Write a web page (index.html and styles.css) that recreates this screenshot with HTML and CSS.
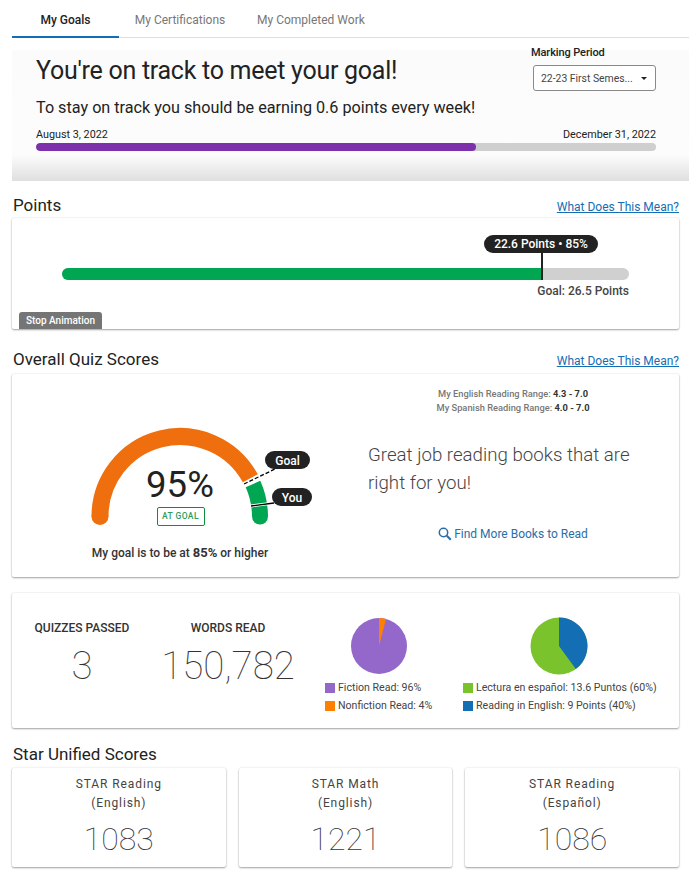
FILE: index.html
```html
<!DOCTYPE html>
<html lang="en">
<head>
<meta charset="utf-8">
<title>My Goals</title>
<link rel="stylesheet" href="styles.css">
</head>
<body>
<nav class="tabs">
  <a class="tab active">My Goals</a>
  <a class="tab t2">My Certifications</a>
  <a class="tab t3">My Completed Work</a>
</nav>
<section class="hero">
  <div class="hero-top">
    <h1>You're on track to meet your goal!</h1>
    <div class="period">
      <div class="period-label">Marking Period</div>
      <div class="select"><span>22-23 First Semes...</span><i class="caret"></i></div>
    </div>
  </div>
  <p class="hero-sub">To stay on track you should be earning 0.6 points every week!</p>
  <div class="dates"><span>August 3, 2022</span><span>December 31, 2022</span></div>
  <div class="time-bar"><div class="time-fill"></div></div>
</section>
<main class="content">
  <div class="sec-head"><h2>Points</h2><a class="help">What Does This Mean?</a></div>
  <section class="card points">
    <div class="pbar"><div class="pfill"></div><div class="pmark"></div><div class="ppill">22.6 Points • 85%</div></div>
    <div class="pgoal">Goal: 26.5 Points</div>
    <button class="stop">Stop Animation</button>
  </section>

  <div class="sec-head quiz-head"><h2>Overall Quiz Scores</h2><a class="help">What Does This Mean?</a></div>
  <section class="card quiz">
    <div class="quiz-left">
      <svg class="gauge" width="336" height="166" viewBox="0 0 336 166">
        <path d="M88 142.500 A80 80 0 0 1 238.300 104.300" class="g-or"/>
        <circle cx="88" cy="142.500" r="8.500" fill="#ef6f0f"/>
        <path d="M241 110 A80 80 0 0 1 248 142.500" class="g-gr"/>
        <circle cx="248" cy="142.500" r="8" fill="#00a651"/>
        <line x1="232" y1="110" x2="263" y2="95" class="g-halo"/>
        <line x1="232" y1="110" x2="263" y2="95" class="g-dash"/>
        <line x1="239" y1="132" x2="262" y2="129" class="g-halo"/>
        <line x1="239" y1="132" x2="262" y2="129" class="g-line"/>
        <rect x="253" y="77" width="45" height="18" rx="9" fill="#222"/>
        <text x="275.500" y="91" class="g-pill">Goal</text>
        <rect x="260" y="114" width="40" height="18" rx="9" fill="#222"/>
        <text x="280" y="128" class="g-pill">You</text>
      </svg>
      <div class="pct">95%</div>
      <div class="at-goal">AT GOAL</div>
      <div class="mygoal">My goal is to be at <b>85%</b> or higher</div>
    </div>
    <div class="quiz-right">
      <div class="ranges">
        <div>My English Reading Range: <b>4.3 - 7.0</b></div>
        <div>My Spanish Reading Range: <b>4.0 - 7.0</b></div>
      </div>
      <p class="great">Great job reading books that are right for you!</p>
      <a class="find">
        <svg width="14" height="14" viewBox="0 0 14 14"><circle cx="5.500" cy="5.500" r="4.200" class="s-ic"/><line x1="8.800" y1="8.800" x2="12.800" y2="12.800" class="s-ic s-h"/></svg>
        Find More Books to Read
      </a>
    </div>
  </section>

  <section class="card stats">
    <div class="stat s1"><div class="stat-label">QUIZZES PASSED</div><div class="stat-num">3</div></div>
    <div class="stat s2"><div class="stat-label">WORDS READ</div><div class="stat-num">150,782</div></div>
    <div class="pie-group g1">
      <svg class="pie" width="58" height="58" viewBox="0 0 58 58"><circle cx="29" cy="29" r="28" fill="#9467cb"/><path d="M29 29 L29 1 A28 28 0 0 1 36 1.900 Z" fill="#ff8000"/></svg>
      <div class="legend"><i class="sw purple"></i>Fiction Read: 96%</div>
      <div class="legend"><i class="sw orange"></i>Nonfiction Read: 4%</div>
    </div>
    <div class="pie-group g2">
      <svg class="pie" width="58" height="58" viewBox="0 0 58 58"><circle cx="29" cy="29" r="28.500" fill="#7ac32c"/><path d="M29 29 L29 .5 A28.500 28.500 0 0 1 45.800 52 Z" fill="#146eb4"/></svg>
      <div class="legend"><i class="sw lime"></i>Lectura en español: 13.6 Puntos (60%)</div>
      <div class="legend"><i class="sw blue"></i>Reading in English: 9 Points (40%)</div>
    </div>
  </section>

  <h2 class="star-title">Star Unified Scores</h2>
  <section class="stars">
    <div class="card star"><div class="star-name">STAR Reading<br>(English)</div><div class="star-num">1083</div></div>
    <div class="card star"><div class="star-name">STAR Math<br>(English)</div><div class="star-num">1221</div></div>
    <div class="card star"><div class="star-name">STAR Reading<br>(Español)</div><div class="star-num">1086</div></div>
  </section>
</main>
</body>
</html>
```
FILE: styles.css
```css
* { box-sizing: border-box; }
html, body { margin: 0; padding: 0; }
body { width: 689px; height: 876px; overflow: hidden; background: #fff; font-family: Roboto, "Liberation Sans", sans-serif; color: #222; }
h1, h2, p { margin: 0; font-weight: 400; }

.tabs { display: flex; height: 38px; margin-left: 12px; border-bottom: 1px solid #dedede; }
.tab { width: 107px; height: 38px; text-align: center; font-size: 12px; line-height: 41px; color: #777; }
.tab.active { color: #222; font-weight: 500; border-bottom: 2px solid #146eb4; line-height: 40px; }
.tab.t2 { width: 122px; }
.tab.t3 { width: 140px; margin-left: 16px; text-align: left; }

.hero { margin: 12px 0 0 12px; height: 131px; padding: 0 33px 0 24px; background: linear-gradient(#fbfbfb 0, #fcfcfc 80%, #dfdfdf 100%); }
.hero-top { display: flex; justify-content: space-between; height: 47px; }
h1 { font-size: 25px; line-height: 30px; padding-top: 6px; color: #222; letter-spacing: -.27px; }
.period { margin-top: -6px; width: 125px; }
.period-label { font-size: 11px; font-weight: 500; line-height: 14px; margin-top: 2px; letter-spacing: -.1px; }
.select { display: flex; align-items: center; justify-content: space-between; width: 123px; height: 26px; margin: 5px 0 0 2px; padding: 0 8px 0 7px; background: #fff; border: 1px solid #8a8a8a; border-radius: 3px; font-size: 10.400px; color: #444; }
.caret { width: 0; height: 0; border: 3.500px solid transparent; border-top: 3.500px solid #222; border-bottom: 0; }
.hero-sub { font-size: 16.200px; line-height: 20px; margin-top: 1px; }
.dates { display: flex; justify-content: space-between; font-size: 10.800px; line-height: 14px; margin-top: 10px; }
.time-bar { height: 8px; margin-top: 1px; background: #cfcfcf; border-radius: 4px; overflow: hidden; }
.time-fill { width: 71%; height: 8px; background: #7d32ab; border-radius: 4px; }

.content { padding: 0 10px 0 12px; }
.sec-head { display: flex; justify-content: space-between; align-items: baseline; height: 37px; padding-top: 14px; }
.sec-head h2, .star-title { font-size: 17px; line-height: 20px; color: #222; padding-left: 1px; }
.help { font-size: 12px; color: #146eb4; text-decoration: underline; }
.card { background: #fff; border-radius: 2px; box-shadow: 0 0 2px rgba(0,0,0,.12), 0 1px 2px rgba(0,0,0,.35); }

.points { position: relative; height: 111px; padding: 50px 50px 0; }
.pbar { position: relative; height: 12px; background: #d0d0d0; border-radius: 6px; }
.pfill { height: 12px; background: #00a651; border-radius: 6px 0 0 6px; width: 480px; }
.pmark { position: absolute; left: 479px; top: -16px; width: 2px; height: 28px; background: #222; }
.ppill { position: absolute; left: 422px; top: -33px; width: 114px; height: 18px; border-radius: 9px; background: #222; color: #fff; text-align: center; font-size: 12px; font-weight: 500; line-height: 18px; }
.pgoal { text-align: right; font-size: 12px; font-weight: 500; color: #444; line-height: 14px; margin-top: 4px; }
.stop { position: absolute; left: 7px; bottom: 0; width: 83px; height: 17px; padding: 0; border: 0; border-radius: 3px 3px 0 0; background: #757575; color: #fff; font: 500 10px/15px Roboto, sans-serif; }

.quiz-head { margin-top: 8px; height: 37px; padding-top: 12px; }
.quiz { display: flex; height: 203px; }
.quiz-left { position: relative; width: 336px; text-align: center; }
.gauge { position: absolute; left: 0; top: 0; }
.g-or, .g-gr { fill: none; stroke-width: 17; }
.g-or { stroke: #ef6f0f; }
.g-gr { stroke: #00a651; stroke-width: 16; }
.g-halo { stroke: #fff; stroke-width: 3; }
.g-dash { stroke: #000; stroke-width: 1.300; stroke-dasharray: 4 2; }
.g-line { stroke: #000; stroke-width: 1.300; }
.g-pill { fill: #fff; font-size: 12px; font-weight: 500; text-anchor: middle; }
.pct { position: relative; padding-top: 88px; font-size: 36.500px; line-height: 46px; color: #222; }
.at-goal { position: relative; width: 48px; height: 19px; margin: 0 auto; left: .5px; top: -1px; border: 1px solid #0a8f3c; border-radius: 2px; font-size: 8.500px; line-height: 17px; color: #2a9d5c; letter-spacing: .4px; font-weight: 500; }
.mygoal { position: relative; font-size: 12px; font-weight: 500; line-height: 16px; margin-top: 18px; color: #333; }
.mygoal b { font-size: 13px; font-weight: 700; }
.quiz-right { width: 290px; margin-left: 20px; }
.ranges { text-align: center; font-size: 9.300px; font-weight: 500; line-height: 14px; color: #777; padding-top: 13px; }
.ranges b { color: #333; font-weight: 700; }
.great { font-size: 18.700px; font-weight: 300; line-height: 28px; color: #444; margin-top: 26px; }
.find { display: flex; justify-content: center; align-items: center; gap: 2px; margin-top: 29px; font-size: 12px; line-height: 16px; color: #2a6ea8; }
.s-ic { fill: none; stroke: #2a6ea8; stroke-width: 1.500; }
.s-h { stroke-width: 2; }

.stats { display: flex; height: 135px; margin-top: 16px; }
.stat { text-align: center; padding-top: 28px; }
.s1 { width: 140px; }
.s2 { width: 152px; }
.stat-label { font-size: 12px; font-weight: 500; line-height: 14px; color: #333; }
.stat-num { font-size: 38.500px; font-weight: 100; line-height: 44px; margin-top: 9px; color: #333; }
.pie-group { font-size: 10.600px; line-height: 18px; color: #444; padding-top: 24px; }
.pie { display: block; margin-bottom: 4px; }
.g1 { width: 138px; margin-left: 21px; }
.g1 .pie { margin-left: 25px; }
.g2 .pie { margin-left: 67px; }
.legend { display: flex; align-items: center; gap: 3px; }
.sw { width: 10px; height: 10px; }
.purple { background: #9467cb; }
.orange { background: #ff8000; }
.lime { background: #7ac32c; }
.blue { background: #146eb4; }

.star-title { margin-top: 16px; }
.stars { display: flex; gap: 13px; margin-top: 4px; }
.star { flex: 1; height: 99px; text-align: center; padding-top: 7px; }
.star-name { font-size: 12px; line-height: 19px; letter-spacing: .9px; color: #444; }
.star-num { font-size: 32px; font-weight: 100; line-height: 38px; margin-top: 7px; color: #333; }
```
